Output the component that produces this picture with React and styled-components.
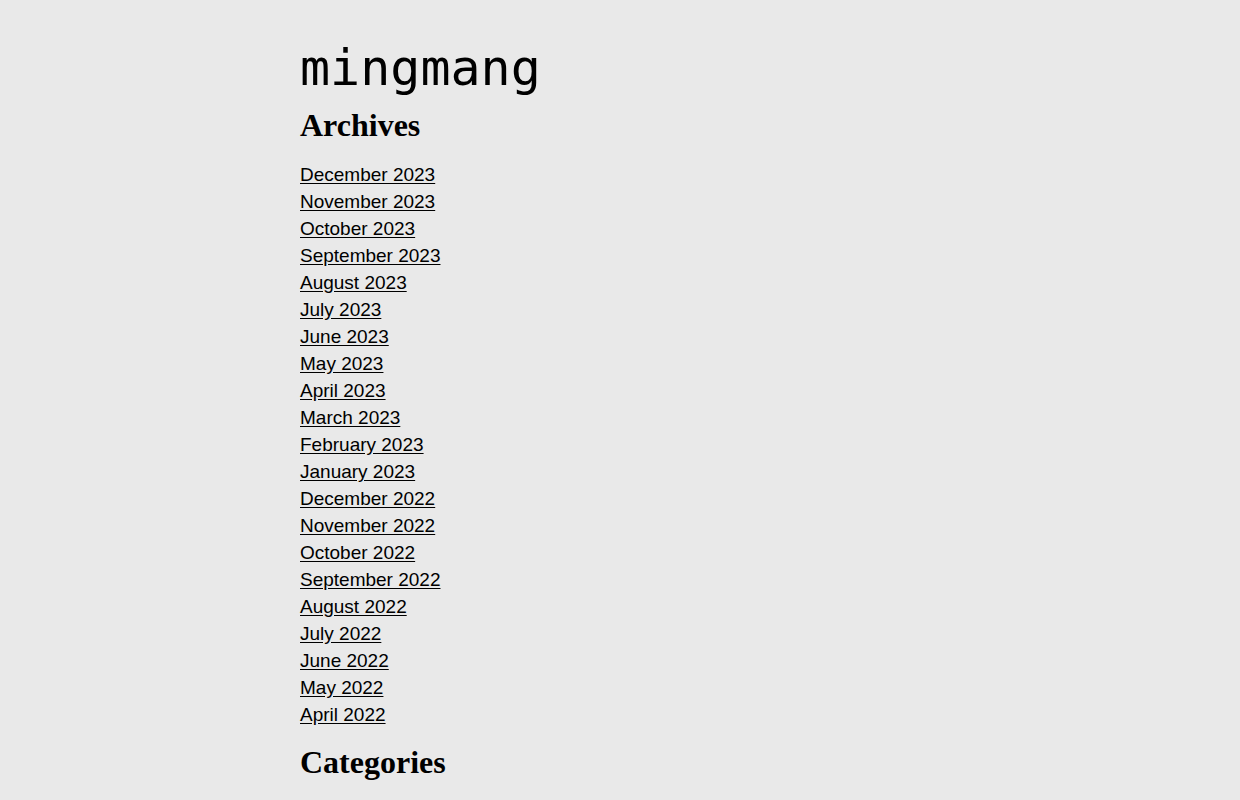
import React from 'react';
import styled, { createGlobalStyle } from 'styled-components';

const GlobalStyle = createGlobalStyle`
  html, body {
    margin: 0;
    padding: 0;
    background-color: #e9e9e9;
    color: #000;
  }
`;

const Page = styled.div`
  max-width: 640px;
  margin: 0 auto;
  padding-top: 38px;
`;

const SiteTitle = styled.h1`
  margin: 0;
  font-family: 'DejaVu Sans Mono', 'Liberation Mono', monospace;
  font-weight: 400;
  font-size: 50px;
  line-height: 60px;
`;

const SectionTitle = styled.h2`
  margin: ${(p) => p.$top}px 0 0;
  font-family: 'Liberation Serif', serif;
  font-weight: 700;
  font-size: 32px;
  line-height: 40px;
`;

const LinkList = styled.ul`
  list-style: none;
  margin: 16px 0 0;
  padding: 0;
`;

const LinkItem = styled.li`
  font-family: 'Liberation Sans', Arial, sans-serif;
  font-size: 19px;
  line-height: 27px;
`;

const ArchiveLink = styled.a`
  color: #000;
  text-decoration: underline;
  text-underline-offset: 2px;
`;

const months = [
  'December', 'November', 'October', 'September', 'August', 'July',
  'June', 'May', 'April', 'March', 'February', 'January',
];

const archives = [
  ...months.map((m) => `${m} 2023`),
  ...months.slice(0, 9).map((m) => `${m} 2022`),
];

const App = () => (
  <>
    <GlobalStyle />
    <Page>
      <SiteTitle>mingmang</SiteTitle>
      <SectionTitle $top={7}>Archives</SectionTitle>
      <LinkList>
        {archives.map((a) => (
          <LinkItem key={a}>
            <ArchiveLink href="#">{a}</ArchiveLink>
          </LinkItem>
        ))}
      </LinkList>
      <SectionTitle $top={14}>Categories</SectionTitle>
    </Page>
  </>
);

export default App;
